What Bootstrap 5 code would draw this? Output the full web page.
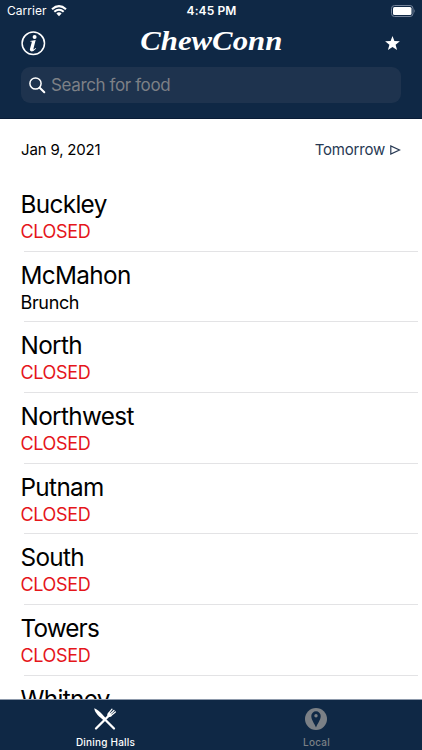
<!DOCTYPE html>
<html lang="en">
<head>
<meta charset="utf-8">
<meta name="viewport" content="width=device-width, initial-scale=1">
<title>ChewConn</title>
<link href="https://cdn.jsdelivr.net/npm/bootstrap@5.3.0/dist/css/bootstrap.min.css" rel="stylesheet">
<style>
body{font-family:Inter,"Liberation Sans",sans-serif;color:#000;background:#fff}
svg{display:block;flex:none}
.screen{height:750px}
.navy{background:#0f2845;color:#fff}
.top-area{height:119px;border-bottom:1px solid #091c36}
.status{height:22px;padding:0 6px 0 7px}
.carrier{font-size:12px;letter-spacing:.05px}
.clock{font-size:12px;font-weight:600;letter-spacing:.1px}
.titlebar{height:42px;padding:0 21px}
.brand{font:italic bold 27px/38px "Liberation Serif",serif;transform:scaleX(1.14);margin-top:-4px}
.search{height:36px;margin:3px 21px 0;padding:0 8px;border-radius:9px;background:#1e334e;color:#7d8086;font-size:17px;letter-spacing:-.38px}
.query{margin-left:5px;padding-top:2px}
.datebar{height:62px;padding:0 21px;font-size:15px}
.today{letter-spacing:-.17px}
.next-day{color:#273953}
.tmr{letter-spacing:-.2px}
.halls{padding-left:20.5px;padding-right:4px}
.hall{height:70.7px;padding-top:8px}
.hall-name{font-size:24.3px;line-height:31px;letter-spacing:-.65px}
.hall-name.less{letter-spacing:-.85px}
.hall-state{font-size:18px;line-height:23px;letter-spacing:-.35px}
.closed{color:#e5161b}
.rule{height:1px;background:#e3e3e5;margin-left:3px}
.tabs{height:51px;border-top:1px solid #8d99ab;font-size:10px;font-weight:500;letter-spacing:.2px}
.tabs span{margin-top:3.5px}
.tab-icon{margin:7px 2px 0 0}
.tab-off{color:#7b8086}
</style>
<script src="https://cdn.jsdelivr.net/npm/bootstrap@5.3.0/dist/js/bootstrap.bundle.min.js"></script>
</head>
<body>
<div class="screen d-flex flex-column overflow-hidden">
<header class="navy top-area flex-shrink-0">
  <div class="status row g-0 align-items-center">
    <div class="col d-flex align-items-center gap-1"><span class="carrier">Carrier</span>
      <svg width="16" height="12" viewBox="0 0 16 12" fill="none" stroke="#fff" stroke-width="2.1"><path d="M1 4.300Q8-2 15 4.300M3.300 6.800Q8 2.700 12.700 6.800"/><path d="M5.400 8.400Q8 6.200 10.600 8.400L8 11.200z" fill="#fff" stroke="none"/></svg>
    </div>
    <div class="col-auto clock">4:45 PM</div>
    <div class="col d-flex justify-content-end">
      <svg width="26" height="12" viewBox="0 0 26 12"><rect x="1.500" y=".5" width="21.500" height="11" rx="3" fill="none" stroke="#74839a"/><rect x="3" y="2" width="18.500" height="8" rx="1.500" fill="#fff"/><path d="M24.300 4q1.500 2 0 4z" fill="#74839a"/></svg>
    </div>
  </div>
  <div class="titlebar row g-0 align-items-center">
    <div class="col"><svg width="25" height="25" viewBox="0 0 25 25"><circle cx="12.300" cy="12.300" r="11.200" fill="none" stroke="#fff" stroke-width="1.500"/><circle cx="13.600" cy="6" r="2" fill="#fff"/><path d="M9.300 9.900l5.400-.8-2.200 8.400q-.2 1.200.6.800l1.500-1.200.5.500q-2.200 2.800-4.500 2.800-2.200-.2-1.600-2.600l1.700-6.300q.3-1-.5-.9h-1z" fill="#fff"/></svg></div>
    <div class="col-auto brand">ChewConn</div>
    <div class="col d-flex justify-content-end"><svg width="17" height="17" viewBox="0 0 17 17"><path d="M8.500 1l1.900 5.100 5.500.2-4.300 3.400 1.500 5.300-4.600-3-4.600 3 1.500-5.300L1.100 6.300l5.500-.2z" fill="#fff"/></svg></div>
  </div>
  <div class="search d-flex align-items-center">
    <svg width="17" height="17" viewBox="0 0 17 17" fill="none" stroke="#fff" stroke-width="1.500"><circle cx="6.500" cy="6.500" r="5.600"/><path d="M10.700 10.700l4.600 4.600" stroke-width="2" stroke-linecap="round"/></svg>
    <span class="query">Search for food</span>
  </div>
</header>
<main class="flex-grow-1 overflow-hidden">
  <div class="datebar d-flex align-items-center justify-content-between">
    <span class="today">Jan 9, 2021</span>
    <span class="next-day d-flex align-items-center gap-1"><span class="tmr">Tomorrow</span>
      <svg width="12" height="12" viewBox="0 0 12 12" fill="none" stroke="currentColor" stroke-width="1.200"><path d="M1.800 2v8l8.700-4z"/></svg></span>
  </div>
  <div class="halls">
    <div class="hall d-flex flex-column"><span class="hall-name">Buckley</span><span class="hall-state closed">CLOSED</span><div class="rule mt-auto"></div></div>
    <div class="hall d-flex flex-column"><span class="hall-name">McMahon</span><span class="hall-state">Brunch</span><div class="rule mt-auto"></div></div>
    <div class="hall d-flex flex-column"><span class="hall-name">North</span><span class="hall-state closed">CLOSED</span><div class="rule mt-auto"></div></div>
    <div class="hall d-flex flex-column"><span class="hall-name">Northwest</span><span class="hall-state closed">CLOSED</span><div class="rule mt-auto"></div></div>
    <div class="hall d-flex flex-column"><span class="hall-name">Putnam</span><span class="hall-state closed">CLOSED</span><div class="rule mt-auto"></div></div>
    <div class="hall d-flex flex-column"><span class="hall-name">South</span><span class="hall-state closed">CLOSED</span><div class="rule mt-auto"></div></div>
    <div class="hall d-flex flex-column"><span class="hall-name less">Towers</span><span class="hall-state closed">CLOSED</span><div class="rule mt-auto"></div></div>
    <div class="hall d-flex flex-column"><span class="hall-name">Whitney</span></div>
  </div>
</main>
<nav class="navy tabs row g-0 flex-shrink-0 text-center">
  <div class="col d-flex flex-column align-items-center">
    <svg class="tab-icon" width="24" height="24" viewBox="0 0 24 24" fill="none" stroke="#fff"><path d="M1.200 1.200C4 2 9 6.500 13 11.500l-2 2C6.500 10 1.800 6 1.200 1.200z" fill="#fff" stroke="none"/><path d="M12.500 13l8.500 8.500M3 21.500L16.500 8" stroke-width="2.300" stroke-linecap="round"/><path d="M14.500 9.500q-.8-2.200.5-3.700l1.500 0 2 2 0 1.500q-2 1.500-4 .2z" fill="#fff" stroke="none"/><path d="M15.500 6.500L19 2.200M16.800 7.500L21 3.500M17.800 8.800L22.400 5" stroke-width="1.200" stroke-linecap="round"/></svg>
    <span>Dining Halls</span>
  </div>
  <div class="col d-flex flex-column align-items-center tab-off">
    <svg class="tab-icon" width="24" height="24" viewBox="0 0 24 24"><circle cx="12" cy="12" r="11" fill="currentColor"/><path d="M12 20.500C10.500 16.500 7.300 13 7.300 9a4.700 4.700 0 0 1 9.400 0c0 4-3.200 7.500-4.700 11.500z" fill="#0f2845"/><circle cx="12" cy="8.800" r="1.700" fill="currentColor"/></svg>
    <span>Local</span>
  </div>
</nav>
</div>
</body>
</html>
